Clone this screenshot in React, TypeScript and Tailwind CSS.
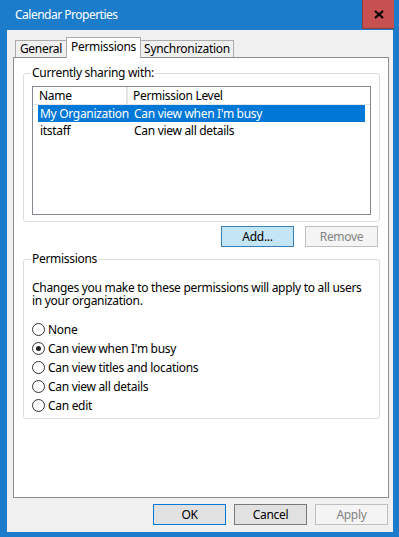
import React from 'react';

const Radio = ({ label, checked }: { label: string; checked?: boolean }) => (
  <div className="h-[19px] flex items-center">
    <span className="w-[13px] h-[13px] rounded-full border border-[#333] bg-white flex items-center justify-center">
      {checked && <span className="w-[5px] h-[5px] rounded-full bg-[#222]" />}
    </span>
    <span className="ml-[3px]">{label}</span>
  </div>
);

const App = () => {
  return (
    <div className="w-[399px] h-[537px] bg-[#1a7ccb] flex flex-col font-['Noto_Sans',sans-serif] text-[12px] tracking-[-0.3px] text-black leading-[16px]">
      <div className="h-[30px] flex items-start justify-between">
        <span className="pl-[15px] pt-[7px] text-white tracking-[-0.5px]">Calendar Properties</span>
        <div className="w-[32px] h-[29px] mr-[5px] bg-[#c75050] border-l border-b border-[#8e3b3b] flex items-center justify-center">
          <svg width="10" height="9" viewBox="0 0 10 9">
            <path d="M1 1 L9 8 M9 1 L1 8" stroke="#000" strokeWidth="2.2" />
          </svg>
        </div>
      </div>

      <div className="flex-1 ml-[7px] mr-[6px] mb-[5px] bg-[#f0f0f0] flex flex-col">
        <div className="h-[27px] pl-[8px] flex items-end">
          <div className="w-[51px] h-[17px] border-l border-t border-[#acacac] bg-[#f0f0f0] flex items-center justify-center">
            General
          </div>
          <div className="w-[75px] h-[21px] -mb-px relative z-10 border-l border-t border-r border-[#acacac] bg-white flex items-start justify-center pt-px">
            Permissions
          </div>
          <div className="w-[93px] h-[17px] border-t border-r border-[#acacac] bg-[#f0f0f0] flex items-center justify-center">
            Synchronization
          </div>
        </div>

        <div className="ml-[6px] w-[376px] h-[441px] border border-[#8c8d94] bg-white flex flex-col">
          <fieldset className="ml-[9px] mt-[7px] w-[357px] border border-[#dcdcdc] rounded-[3px] pl-[8px] pr-[8px] pb-[6px]">
            <legend className="px-[1px] ml-[-1px]">Currently sharing with:</legend>
            <div className="mt-[5px] w-[339px] h-[129px] border border-[#828790] bg-white">
              <div className="flex h-[18px] border-b border-[#e5e5e5]">
                <div className="w-[95px] pl-[6px] border-r-2 border-[#e5e5e5] flex items-center">Name</div>
                <div className="pl-[5px] flex items-center">Permission Level</div>
              </div>
              <div className="mx-[5px] h-[17px] bg-[#0078d7] text-white flex items-center">
                <span className="w-[96px] pl-[2px] whitespace-nowrap">My Organization</span>
                <span>Can view when I'm busy</span>
              </div>
              <div className="mx-[5px] h-[17px] flex items-center">
                <span className="w-[96px] pl-[2px]">itstaff</span>
                <span>Can view all details</span>
              </div>
            </div>
          </fieldset>

          <div className="mt-[4px] mr-[10px] flex justify-end gap-[11px]">
            <div className="w-[73px] h-[21px] border border-[#3c7fb1] bg-[#c4e5f6] flex items-center justify-center">Add...</div>
            <div className="w-[73px] h-[21px] border border-[#bfbfbf] bg-[#f4f4f4] text-[#838383] flex items-center justify-center">Remove</div>
          </div>

          <fieldset className="ml-[9px] mt-[4px] w-[357px] border border-[#dcdcdc] rounded-[3px] pl-[8px] pr-[8px] pb-[3px]">
            <legend className="px-[1px] ml-[-1px]">Permissions</legend>
            <p className="mt-[14px] leading-[13px]">
              Changes you make to these permissions will apply to all users in your organization.
            </p>
            <div className="mt-[13px] flex flex-col">
              <Radio label="None" />
              <Radio label="Can view when I'm busy" checked />
              <Radio label="Can view titles and locations" />
              <Radio label="Can view all details" />
              <Radio label="Can edit" />
            </div>
          </fieldset>
        </div>

        <div className="mt-[6px] mr-[5px] flex justify-end gap-[8px]">
          <div className="w-[73px] h-[21px] border border-[#0078d7] bg-[#e1e1e1] flex items-center justify-center">OK</div>
          <div className="w-[73px] h-[21px] border border-[#7a7a7a] bg-[#e1e1e1] flex items-center justify-center">Cancel</div>
          <div className="w-[73px] h-[21px] border border-[#bfbfbf] bg-[#f4f4f4] text-[#838383] flex items-center justify-center">Apply</div>
        </div>
      </div>
    </div>
  );
};

export default App;
